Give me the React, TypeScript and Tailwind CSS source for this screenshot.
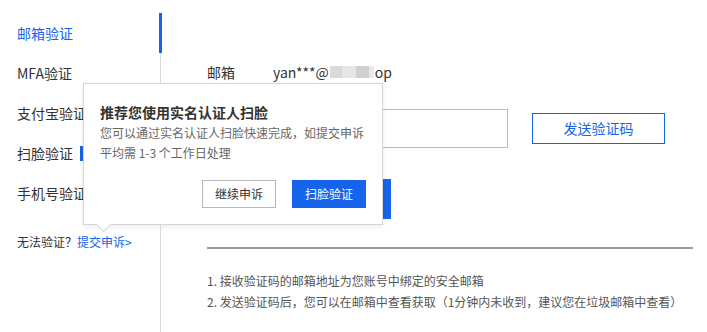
export default function App() {
  const menu = ["邮箱验证", "MFA验证", "支付宝验证", "扫脸验证", "手机号验证"];
  return (
    <div className="relative w-[707px] h-[332px] overflow-hidden bg-white text-[#333] font-['Noto_Sans_CJK_SC',sans-serif] flex">
      {/* sidebar */}
      <div className="w-[161px] shrink-0 pl-[17px] pt-[13px]">
        <div className="border-r border-[#dcdcdc] h-[320px]">
          {menu.map((m, i) => (
            <div key={m} className={`relative h-[40px] flex items-center text-[14px] ${i === 0 ? "text-[#1664eb]" : "text-[#333]"}`}>
              {m}
              {i === 3 && <span className="ml-[7px] inline-block w-[16px] h-[15px] bg-[#1664eb]"></span>}
              {i === 0 && <span className="absolute right-[-2px] top-0 w-[3px] h-[40px] bg-[#1664eb]"></span>}
            </div>
          ))}
          <div className="mt-[20px] text-[12px] leading-[18px]">
            无法验证？<span className="text-[#1664eb]">提交申诉&gt;</span>
          </div>
        </div>
      </div>

      {/* main */}
      <div className="flex-1 pl-[46px] pt-[62px] pr-[14px]">
        <div className="flex items-center h-[20px] text-[14px]">
          <span className="w-[66px]">邮箱</span>
          <span>yan***@</span>
          <span className="inline-flex h-[12px] mx-[1px]">
            <span className="w-[12px] bg-[#dadada]"></span>
            <span className="w-[14px] bg-[#e6e6e6]"></span>
            <span className="w-[13px] bg-[#d0d0d0]"></span>
            <span className="w-[5px] bg-[#e9e9e9]"></span>
          </span>
          <span>op</span>
        </div>
        <div className="flex items-center mt-[27px] pl-[66px]">
          <div className="w-[235px] h-[39px] border border-[#bdbdbd]"></div>
          <button className="ml-[24px] w-[133px] h-[31px] border border-[#1664eb] text-[#1664eb] text-[14px]">发送验证码</button>
        </div>
        <div className="mt-[31px] pl-[66px]">
          <div className="w-[118px] h-[40px] bg-[#1664eb]"></div>
        </div>
        <div className="mt-[28px] h-[2px] bg-[#9a9a9a]"></div>
        <div className="mt-[21px] text-[12px] leading-[21px] text-[#555]">
          <div>1. 接收验证码的邮箱地址为您账号中绑定的安全邮箱</div>
          <div>2. 发送验证码后，您可以在邮箱中查看获取（1分钟内未收到，建议您在垃圾邮箱中查看）</div>
        </div>
      </div>

      {/* popover */}
      <div className="absolute left-[83px] top-[83px] w-[300px] h-[142px] bg-white border border-[#d6d6d6] shadow-[0_2px_6px_rgba(0,0,0,0.08)] px-[16px] pt-[17px]">
        <div className="text-[14px] leading-[22px] font-bold text-[#333]">推荐您使用实名认证人扫脸</div>
        <div className="text-[12px] leading-[20px] text-[#666]">
          <div>您可以通过实名认证人扫脸快速完成，如提交申诉</div>
          <div>平均需 1-3 个工作日处理</div>
        </div>
        <div className="flex justify-end gap-[16px] mt-[17px]">
          <button className="w-[74px] h-[28px] border border-[#b8b8b8] text-[12px] text-[#333]">继续申诉</button>
          <button className="w-[74px] h-[28px] bg-[#1664eb] text-[12px] text-white">扫脸验证</button>
        </div>
        <span className="absolute left-[14px] bottom-[-6px] w-[11px] h-[11px] rotate-45 bg-white border-r border-b border-[#d6d6d6]"></span>
      </div>
    </div>
  );
}
